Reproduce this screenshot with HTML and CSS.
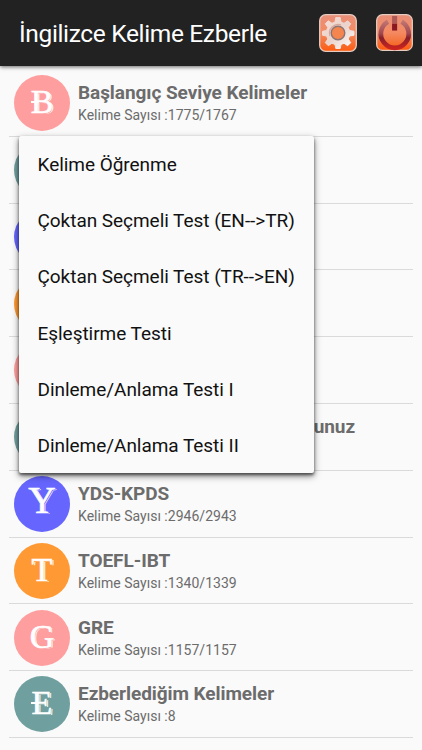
FILE: index.html
```html
<!DOCTYPE html>
<html lang="tr">
<head>
  <meta charset="utf-8">
  <title>İngilizce Kelime Ezberle</title>
  <link rel="stylesheet" href="styles.css">
</head>
<body>
  <header class="toolbar">
    <h1>İngilizce Kelime Ezberle</h1>
    <svg class="tool" viewBox="0 0 38 38">
      <defs>
        <linearGradient id="tile" x1="0" y1="0" x2="0" y2="1">
          <stop offset="0" stop-color="#e8907a"/>
          <stop offset=".5" stop-color="#f58a62"/>
          <stop offset=".75" stop-color="#f4733a"/>
          <stop offset="1" stop-color="#ff5a0c"/>
        </linearGradient>
        <linearGradient id="gear" x1="0" y1="0" x2="1" y2="1">
          <stop offset="0" stop-color="#f7ddd6"/>
          <stop offset=".5" stop-color="#ead3cc"/>
          <stop offset="1" stop-color="#fff"/>
        </linearGradient>
      </defs>
      <rect x=".7" y=".7" width="36.6" height="36.6" rx="6" fill="url(#tile)" stroke="#e8cbc0" stroke-width="1.3"/>
      <path fill="url(#gear)" stroke="url(#gear)" stroke-width="1" stroke-linejoin="round" d="M16 8L16.800 3.500H21.200L22 8L25 9.300L28.700 6.800L31.700 9.800L29.200 13.500L30.500 16.500L35 17.300V21.200L30.500 22L29.200 25L31.700 28.700L28.700 31.700L25 29.200L22 30.500L21.200 34.500H16.800L16 30.500L13 29.200L9.300 31.700L6.300 28.700L8.800 25L7.500 22L3.500 21.200V17.300L7.500 16.500L8.800 13.500L6.300 9.800L9.300 6.800L13 9.300Z"/>
      <path d="M11 22A8.800 8.800 0 0 1 22 10.800" fill="none" stroke="#d5a79c" stroke-width="1.300"/>
      <circle cx="19" cy="19" r="6.800" fill="#f4854f" stroke="#8c7472" stroke-width="1.400"/>
    </svg>
    <svg class="tool tool-power" viewBox="0 0 38 38">
      <defs>
        <linearGradient id="ring" x1="0" y1="0" x2="0" y2="1">
          <stop offset="0" stop-color="#c07370"/>
          <stop offset=".45" stop-color="#a04850"/>
          <stop offset=".62" stop-color="#85202c"/>
          <stop offset="1" stop-color="#c92420"/>
        </linearGradient>
      </defs>
      <rect x=".7" y=".7" width="36.600" height="36.600" rx="6" fill="url(#tile)" stroke="#e8cbc0" stroke-width="1.3"/>
      <path d="M12.300 8A14.300 14.300 0 1 0 26.300 8" fill="none" stroke="url(#ring)" stroke-width="4.800"/>
      <rect x="16.500" y="2" width="5.200" height="8" fill="#b05a58"/>
      <rect x="16.500" y="10" width="5.200" height="7" fill="#8a1822"/>
    </svg>
  </header>

  <main class="list">
    <div class="row">
      <div class="badge pink barred">B</div>
      <div class="info">
        <h2>Başlangıç Seviye Kelimeler</h2>
        <p>Kelime Sayısı :1775/1767</p>
      </div>
    </div>
    <div class="row"><div class="badge teal"></div></div>
    <div class="row"><div class="badge blue"></div></div>
    <div class="row"><div class="badge orange"></div></div>
    <div class="row"><div class="badge pink"></div></div>
    <div class="row">
      <div class="badge teal"></div>
      <div class="info covered"><h2>unuz</h2></div>
    </div>
    <div class="row">
      <div class="badge blue tall">Y</div>
      <div class="info">
        <h2>YDS-KPDS</h2>
        <p>Kelime Sayısı :2946/2943</p>
      </div>
    </div>
    <div class="row">
      <div class="badge orange">T</div>
      <div class="info">
        <h2>TOEFL-IBT</h2>
        <p>Kelime Sayısı :1340/1339</p>
      </div>
    </div>
    <div class="row">
      <div class="badge pink">G</div>
      <div class="info">
        <h2>GRE</h2>
        <p>Kelime Sayısı :1157/1157</p>
      </div>
    </div>
    <div class="row">
      <div class="badge teal barred">E</div>
      <div class="info">
        <h2>Ezberlediğim Kelimeler</h2>
        <p>Kelime Sayısı :8</p>
      </div>
    </div>
  </main>

  <!-- Popup menu -->
  <ul class="menu">
    <li>Kelime Öğrenme</li>
    <li>Çoktan Seçmeli Test (EN--&gt;TR)</li>
    <li>Çoktan Seçmeli Test (TR--&gt;EN)</li>
    <li>Eşleştirme Testi</li>
    <li>Dinleme/Anlama Testi I</li>
    <li>Dinleme/Anlama Testi II</li>
  </ul>
</body>
</html>
```

FILE: styles.css
```css
* { box-sizing: border-box; }

body {
  margin: 0;
  height: 750px;
  overflow: hidden;
  position: relative;
  background: #fafafa;
  font-family: Roboto, sans-serif;
}

h1, h2, p, ul { margin: 0; padding: 0; }

.toolbar {
  display: flex;
  align-items: center;
  height: 66px;
  padding: 0 9px 0 19px;
  background: #222;
  box-shadow: 0 1px 4px rgba(0, 0, 0, 0.6);
}

.toolbar h1 {
  flex: 1;
  color: #fff;
  font-size: 24.5px;
  font-weight: 400;
  line-height: 30px;
  letter-spacing: -0.35px;
  padding-top: 2px;
}

.tool { width: 38px; height: 38px; }

.tool-power {
  width: 37px;
  height: 37px;
  margin: 0 0 1px 19px;
}

.list { padding: 4px 9px 0; }

.row {
  display: flex;
  height: 66.8px;
  padding: 5.3px 0 0 5px;
  border-bottom: 1px solid #dadada;
}

.badge {
  position: relative;
  width: 56px;
  height: 56px;
  border-radius: 50%;
  color: #fff;
  font: 34px/53px "Liberation Serif", serif;
  text-align: center;
  -webkit-text-stroke: 0.6px #fff;
}

.tall { font-size: 38px; line-height: 48px; }

.pink { background: #ff9e9e; --shade: #ff9e9e; }
.teal { background: #6f9f9e; --shade: #6f9f9e; }
.blue { background: #6666ff; --shade: #6666ff; }
.orange { background: #ff9933; --shade: #ff9933; }

/* engraved letters */
.badge { text-shadow: 0.7px 0.7px 0 var(--shade), 1.6px 1.4px 0 #fff; }

.barred::before {
  content: "";
  position: absolute;
  left: 17px;
  top: 26px;
  width: 8px;
  height: 2px;
  background: #fff;
}

.info { padding: 6px 0 0 8px; color: #6c6c6c; }

.info h2 {
  font-size: 19px;
  font-weight: 700;
  line-height: 24px;
  letter-spacing: -0.06px;
}

.info p {
  font-size: 14px;
  line-height: 20px;
  letter-spacing: 0.02px;
}

.covered { width: 285px; text-align: right; }

.menu {
  position: absolute;
  left: 19px;
  top: 136px;
  width: 295px;
  list-style: none;
  background: #fafafa;
  border-radius: 2px;
  box-shadow: 0 3px 7px rgba(0, 0, 0, 0.5), 0 2px 3px rgba(0, 0, 0, 0.5);
}

.menu li {
  height: 56.2px;
  padding-left: 18.5px;
  color: #111;
  font-size: 19px;
  line-height: 57px;
  letter-spacing: -0.04px;
  white-space: nowrap;
}
```
